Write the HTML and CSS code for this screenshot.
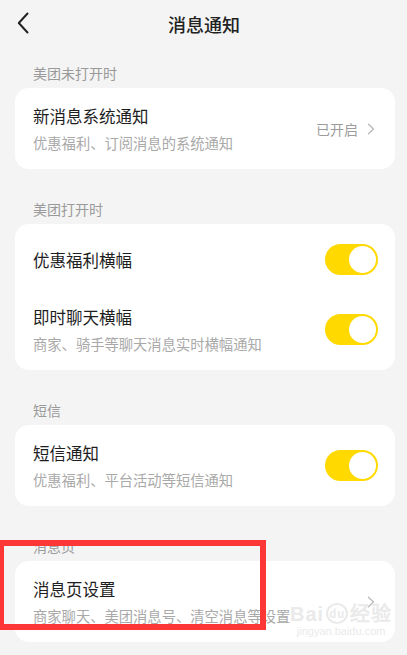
FILE: index.html
```html
<!DOCTYPE html>
<html lang="zh-CN">
<head>
    <meta charset="UTF-8">
    <meta name="viewport" content="width=device-width, initial-scale=1.0">
    <title>消息通知</title>
    <link rel="stylesheet" href="styles.css">
</head>
<body>
    <!-- Top bar -->
    <header class="topbar">
        <span class="back">
            <svg width="12" height="22" viewBox="0 0 12 22"><path d="M10.5 1.5 L1.8 11 L10.5 20.5" fill="none" stroke="#222" stroke-width="2" stroke-linecap="round" stroke-linejoin="round"/></svg>
        </span>
        <h1 class="title">消息通知</h1>
    </header>

    <main class="page">
        <section class="group">
            <div class="group-label">美团未打开时</div>
            <div class="card">
                <div class="row">
                    <div class="row-text">
                        <div class="row-title">新消息系统通知</div>
                        <div class="row-sub">优惠福利、订阅消息的系统通知</div>
                    </div>
                    <div class="row-value">
                        已开启
                        <svg class="chev" width="8" height="12" viewBox="0 0 8 12"><path d="M1.5 1.2 L6.5 6 L1.5 10.8" fill="none" stroke="#bbb" stroke-width="1.4" stroke-linecap="round" stroke-linejoin="round"/></svg>
                    </div>
                </div>
            </div>
        </section>

        <section class="group">
            <div class="group-label">美团打开时</div>
            <div class="card">
                <div class="row row-single">
                    <div class="row-text">
                        <div class="row-title">优惠福利横幅</div>
                    </div>
                    <span class="switch"></span>
                </div>
                <div class="row">
                    <div class="row-text">
                        <div class="row-title">即时聊天横幅</div>
                        <div class="row-sub">商家、骑手等聊天消息实时横幅通知</div>
                    </div>
                    <span class="switch"></span>
                </div>
            </div>
        </section>

        <section class="group">
            <div class="group-label">短信</div>
            <div class="card">
                <div class="row">
                    <div class="row-text">
                        <div class="row-title">短信通知</div>
                        <div class="row-sub">优惠福利、平台活动等短信通知</div>
                    </div>
                    <span class="switch"></span>
                </div>
            </div>
        </section>

        <section class="group group-marked">
            <div class="group-label">消息页</div>
            <div class="card">
                <div class="row">
                    <div class="row-text">
                        <div class="row-title">消息页设置</div>
                        <div class="row-sub">商家聊天、美团消息号、清空消息等设置</div>
                    </div>
                    <div class="row-value">
                        <svg class="chev" width="8" height="12" viewBox="0 0 8 12"><path d="M1.5 1.2 L6.5 6 L1.5 10.8" fill="none" stroke="#bbb" stroke-width="1.4" stroke-linecap="round" stroke-linejoin="round"/></svg>
                    </div>
                </div>
            </div>
            <!-- annotation box and watermark drawn over the card -->
            <div class="mark-box"></div>
            <div class="watermark">
                <div class="wm-logo">Bai<span class="wm-du">du</span>经验</div>
                <div class="wm-url">jingyan.baidu.com</div>
            </div>
        </section>
    </main>
</body>
</html>
```

FILE: styles.css
```css
/* Reset */
* {
    margin: 0;
    padding: 0;
    box-sizing: border-box;
    font-family: "Noto Sans CJK SC", "Noto Sans", sans-serif;
}

/* Page layout */
body {
    width: 407px;
    height: 655px;
    overflow: hidden;
    background-color: #f4f4f4;
    color: #1e1e1e;
}

/* Top bar */
.topbar {
    height: 48px;
    display: flex;
    align-items: center;
    justify-content: center;
    position: relative;
}

.back {
    position: absolute;
    left: 17px;
    top: 12px;
    display: flex;
}

.title {
    font-size: 18px;
    font-weight: 500;
    line-height: 24px;
    color: #222;
    margin-left: 1px;
}

/* Groups and cards */
.page {
    padding: 0 12px 0 15px;
}

.group {
    margin-top: 30px;
}

.group:first-child {
    margin-top: 15px;
}

.group-label {
    padding-left: 18px;
    font-size: 14px;
    line-height: 20px;
    color: #9a9a9a;
    margin-bottom: 5px;
}

.card {
    background-color: #fff;
    border-radius: 14px;
}

.row {
    display: flex;
    align-items: center;
    justify-content: space-between;
    padding: 16px 17px 16px 18px;
}

.row-single {
    padding-top: 20px;
    padding-bottom: 14px;
}

.row-title {
    font-size: 16.5px;
    line-height: 24px;
    color: #1e1e1e;
}

.row-sub {
    font-size: 14.3px;
    line-height: 20px;
    color: #a9a9a9;
    margin-top: 5px;
}

.row-value {
    display: flex;
    align-items: center;
    font-size: 14px;
    color: #9c9c9c;
    padding-right: 3px;
}

.chev {
    margin-left: 9px;
}

/* Toggle switch (on) */
.switch {
    width: 53px;
    height: 31px;
    border-radius: 16px;
    background-color: #ffd900;
    position: relative;
    flex-shrink: 0;
}

.switch::after {
    content: "";
    position: absolute;
    right: 2px;
    top: 2px;
    width: 27px;
    height: 27px;
    border-radius: 50%;
    background-color: #fff;
}

/* Annotation overlay */
.group-marked {
    position: relative;
}

.mark-box {
    position: absolute;
    left: -17px;
    top: 4px;
    width: 268px;
    height: 90px;
    border: 6px solid #fd3636;
}

.watermark {
    position: absolute;
    left: 275px;
    top: 67px;
    color: #eaeaea;
    text-align: center;
    line-height: 1;
}

.wm-logo {
    font-family: "Liberation Sans", sans-serif;
    font-size: 20px;
    font-weight: bold;
    letter-spacing: 1px;
}

.wm-du {
    display: inline-block;
    font-size: 11px;
    border: 2px solid #eaeaea;
    border-radius: 50%;
    padding: 3px 1px;
    margin: 0 2px;
    vertical-align: 3px;
}

.wm-url {
    font-family: "Liberation Sans", sans-serif;
    font-size: 11px;
    margin-top: 2px;
}
```
